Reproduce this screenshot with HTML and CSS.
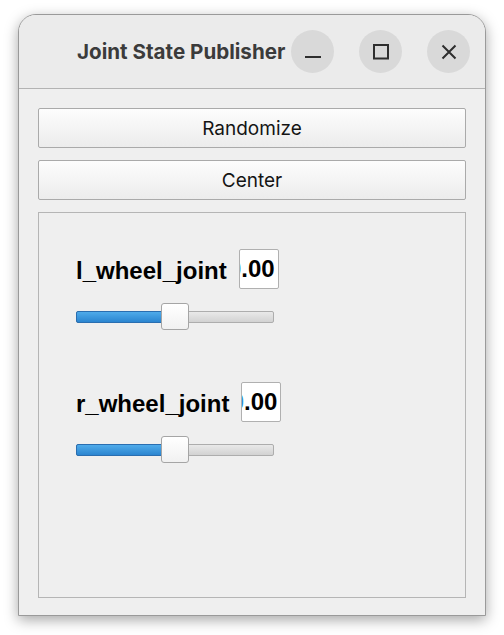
FILE: index.html
```html
<!DOCTYPE html>
<html>
<head>
<meta charset="utf-8">
<link rel="stylesheet" href="styles.css">
</head>
<body>
<div class="window">
  <div class="titlebar">
    <div class="title">Joint State Publisher</div>
    <div class="controls">
      <div class="ctl">
        <svg width="16" height="16" viewBox="0 0 16 16"><line x1="0" y1="13" x2="16" y2="13" stroke="#2e2e2e" stroke-width="2"/></svg>
      </div>
      <div class="ctl">
        <svg width="16" height="16" viewBox="0 0 16 16"><rect x="1" y="1" width="14" height="13.5" fill="none" stroke="#2e2e2e" stroke-width="2"/></svg>
      </div>
      <div class="ctl">
        <svg width="16" height="16" viewBox="0 0 16 16"><path d="M1.5 1.5 L14.5 14.5 M14.5 1.5 L1.5 14.5" stroke="#2e2e2e" stroke-width="2" fill="none"/></svg>
      </div>
    </div>
  </div>
  <div class="content">
    <div class="btn">Randomize</div>
    <div class="btn">Center</div>
    <div class="group">
      <div class="joint">
        <div class="jrow">
          <span class="jlabel">l_wheel_joint</span>
          <span class="jbox"><span class="cut">0</span>.00</span>
        </div>
        <div class="slider">
          <div class="fill"></div>
          <div class="handle"></div>
        </div>
      </div>
      <div class="joint">
        <div class="jrow">
          <span class="jlabel">r_wheel_joint</span>
          <span class="jbox"><span class="cut">0</span>.00</span>
        </div>
        <div class="slider">
          <div class="fill"></div>
          <div class="handle"></div>
        </div>
      </div>
    </div>
  </div>
</div>
</body>
</html>
```

FILE: styles.css
```css
html, body {
  margin: 0;
  padding: 0;
  background: #ffffff;
}
body {
  width: 504px;
  height: 635px;
  overflow: hidden;
}
.window {
  box-sizing: border-box;
  margin: 14px 0 0 18px;
  width: 468px;
  height: 602px;
  border: 1px solid #9a9a9a;
  border-radius: 18px 18px 0 0;
  background: #efefef;
  box-shadow: 0 4px 14px rgba(0,0,0,0.35);
  display: flex;
  flex-direction: column;
  overflow: hidden;
}
.titlebar {
  height: 73px;
  flex: none;
  background: #ebebeb;
  border-bottom: 1px solid #b3b3b3;
  display: flex;
  align-items: center;
  padding: 0 15px 0 58px;
}
.title {
  font-family: Inter, "Noto Sans", sans-serif;
  font-weight: 700;
  font-size: 20.6px;
  color: #3b3b3b;
  white-space: nowrap;
}
.controls {
  margin-left: auto;
  display: flex;
  gap: 25px;
}
.ctl {
  width: 43px;
  height: 43px;
  border-radius: 50%;
  background: #d9d9d9;
  display: flex;
  align-items: center;
  justify-content: center;
}
.content {
  flex: 1;
  display: flex;
  flex-direction: column;
  gap: 12px;
  padding: 19px 19px 17px 19px;
}
.btn {
  height: 38px;
  border: 1px solid #aaaaaa;
  border-radius: 2px;
  background: linear-gradient(#fdfdfd, #ececec);
  display: flex;
  align-items: center;
  justify-content: center;
  font-family: Inter, "Noto Sans", sans-serif;
  font-size: 19px;
  color: #141414;
}
.group {
  flex: 1;
  border: 1px solid #b5b5b5;
  padding: 36px 0 0 37px;
  display: flex;
  flex-direction: column;
  gap: 52px;
}
.joint {
  display: flex;
  flex-direction: column;
  gap: 14px;
}
.jrow {
  display: flex;
  align-items: center;
  height: 40px;
}
.jlabel {
  font-family: "Liberation Sans", Arial, sans-serif;
  font-weight: 700;
  font-size: 24px;
  color: #000;
  margin-top: 4px;
}
.jbox {
  box-sizing: border-box;
  margin-left: 12px;
  width: 40px;
  height: 40px;
  border: 1px solid #b0b0b0;
  border-radius: 2px;
  background: #fff;
  font-family: "Liberation Sans", Arial, sans-serif;
  font-weight: 700;
  font-size: 24px;
  color: #000;
  line-height: 38px;
  overflow: hidden;
  white-space: nowrap;
  direction: rtl;
  padding-right: 3px;
  text-align: right;
}
.cut {
  color: #2f8fd8;
}
.slider {
  position: relative;
  width: 198px;
  height: 27px;
  display: flex;
  align-items: center;
}
.slider::before {
  content: "";
  box-sizing: border-box;
  width: 198px;
  height: 12px;
  border: 1px solid #adadad;
  border-radius: 2px;
  background: linear-gradient(#e9e9e9, #d2d2d2);
}
.fill {
  position: absolute;
  left: 0;
  top: 8px;
  box-sizing: border-box;
  width: 92px;
  height: 12px;
  border: 1px solid #2a6eb0;
  border-radius: 2px;
  background: linear-gradient(#4fabea, #2b85d0);
}
.handle {
  position: absolute;
  left: 85px;
  top: 0;
  box-sizing: border-box;
  width: 28px;
  height: 27px;
  border: 1px solid #a5a5a5;
  border-radius: 3px;
  background: linear-gradient(#ffffff, #f1f1f1);
}
```
